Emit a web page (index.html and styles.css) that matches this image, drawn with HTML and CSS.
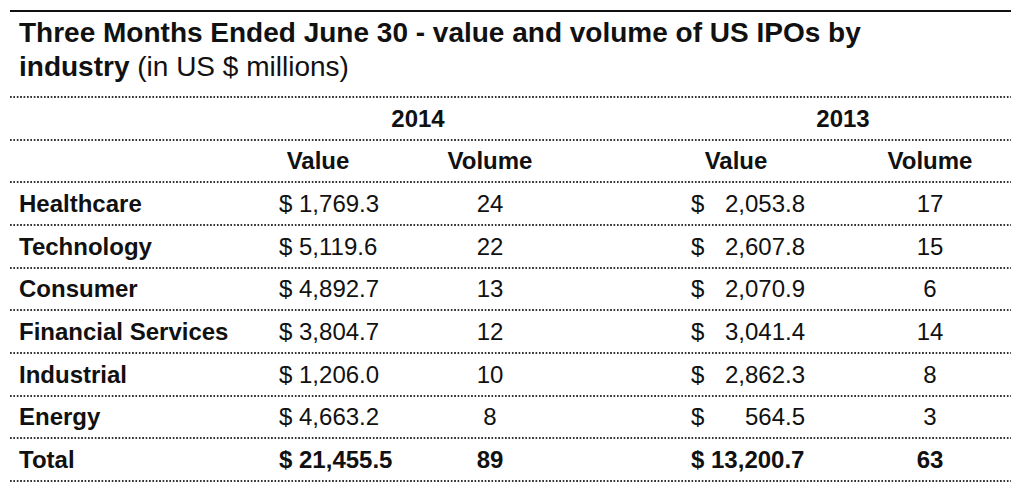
FILE: index.html
```html
<!DOCTYPE html>
<html lang="en">
<head>
<meta charset="utf-8">
<title>US IPOs by industry</title>
<link rel="stylesheet" href="styles.css">
</head>
<body>
<div class="report">
  <h1 class="title"><strong>Three Months Ended June 30 - value and volume of US IPOs by</strong> <strong>industry</strong> (in US $ millions)</h1>
  <div class="table">
    <div class="row years">
      <span class="year y14">2014</span>
      <span class="year y13">2013</span>
    </div>
    <div class="row head">
      <span class="c1">Value</span>
      <span class="c2">Volume</span>
      <span class="c3">Value</span>
      <span class="c4">Volume</span>
    </div>
    <div class="row">
      <span class="label">Healthcare</span>
      <span class="c1 v14">$ 1,769.3</span>
      <span class="c2">24</span>
      <span class="c3 v13"><span>$</span><span>2,053.8</span></span>
      <span class="c4">17</span>
    </div>
    <div class="row">
      <span class="label">Technology</span>
      <span class="c1 v14">$ 5,119.6</span>
      <span class="c2">22</span>
      <span class="c3 v13"><span>$</span><span>2,607.8</span></span>
      <span class="c4">15</span>
    </div>
    <div class="row">
      <span class="label">Consumer</span>
      <span class="c1 v14">$ 4,892.7</span>
      <span class="c2">13</span>
      <span class="c3 v13"><span>$</span><span>2,070.9</span></span>
      <span class="c4">6</span>
    </div>
    <div class="row">
      <span class="label">Financial Services</span>
      <span class="c1 v14">$ 3,804.7</span>
      <span class="c2">12</span>
      <span class="c3 v13"><span>$</span><span>3,041.4</span></span>
      <span class="c4">14</span>
    </div>
    <div class="row">
      <span class="label">Industrial</span>
      <span class="c1 v14">$ 1,206.0</span>
      <span class="c2">10</span>
      <span class="c3 v13"><span>$</span><span>2,862.3</span></span>
      <span class="c4">8</span>
    </div>
    <div class="row">
      <span class="label">Energy</span>
      <span class="c1 v14">$ 4,663.2</span>
      <span class="c2">8</span>
      <span class="c3 v13"><span>$</span><span>564.5</span></span>
      <span class="c4">3</span>
    </div>
    <div class="row total">
      <span class="label">Total</span>
      <span class="c1 v14">$ 21,455.5</span>
      <span class="c2">89</span>
      <span class="c3 v13 single"><span>$ 13,200.7</span></span>
      <span class="c4">63</span>
    </div>
  </div>
</div>
</body>
</html>
```

FILE: styles.css
```css
html, body {
  margin: 0;
  padding: 0;
  background: #ffffff;
}

body {
  font-family: "Liberation Sans", Arial, sans-serif;
  color: #111111;
}

.report {
  margin: 10px 0 0 10px;
  width: 1001px;
}

.title,
.row {
  background-image: linear-gradient(to right, #333333 2px, transparent 2px);
  background-size: 3.4px 2px;
  background-repeat: repeat-x;
  background-position: left bottom;
}

.title {
  margin: 0;
  box-sizing: border-box;
  height: 88px;
  border-top: 2px solid #111111;
  padding: 4px 100px 14px 9px;
  font-size: 28px;
  line-height: 34px;
  font-weight: normal;
}

.title strong {
  font-weight: bold;
}

.row {
  display: grid;
  grid-template-columns: 260px 96px 248px 244px 144px;
  align-items: center;
  box-sizing: border-box;
  height: 42.667px;
  padding-bottom: 2px;
  font-size: 24px;
  line-height: 27px;
  white-space: nowrap;
}

.head,
.years,
.label,
.total {
  font-weight: bold;
}

.label {
  grid-column: 1;
  padding-left: 9px;
}

.c1 { grid-column: 2; text-align: center; }
.c2 { grid-column: 3; text-align: center; }
.c3 { grid-column: 4; text-align: center; }
.c4 { grid-column: 5; text-align: center; }

.year {
  text-align: center;
}

.y14 {
  grid-column: 2 / span 2;
  padding-right: 48px;
}

.y13 {
  grid-column: 4 / span 2;
  padding-left: 70px;
}

.v14 {
  text-align: left;
  padding-left: 9px;
}

.v13 {
  display: flex;
  justify-content: space-between;
  padding: 0 53px 0 77px;
}

.v13.single {
  justify-content: flex-start;
}
```
